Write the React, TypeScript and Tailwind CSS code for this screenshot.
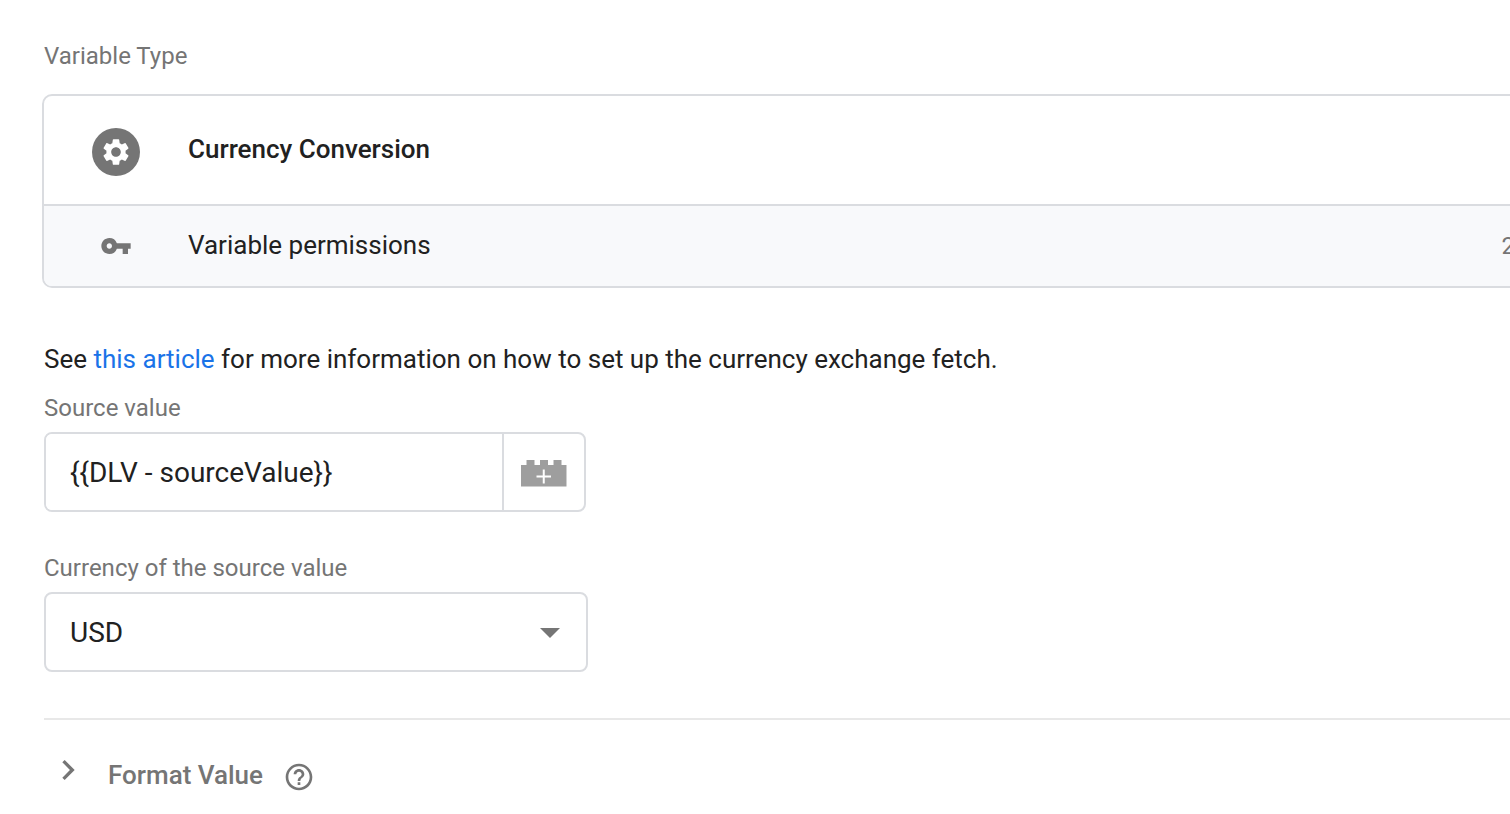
import { useState } from "react";
import { MdChevronRight, MdHelpOutline, MdSettings, MdVpnKey } from "react-icons/md";

function BrickIcon() {
  return (
    <svg width="46" height="28" viewBox="0 0 46 28" aria-hidden="true">
      <path
        d="M0 6h5.500V1h8v5H19V1h8v5h5.500V1h8v5H45.500v21.500H0z"
        fill="#9e9e9e"
      />
      <path d="M15.500 17.500h14.500M22.750 10.500v14" stroke="#fff" strokeWidth="2" />
    </svg>
  );
}

function VariableTypeCard() {
  return (
    <div className="-mr-12 overflow-hidden rounded-[10px] border-2 border-[#dadce0] bg-white">
      <button
        type="button"
        className="flex w-full items-start gap-12 px-12 pt-8 pb-7 text-left"
      >
        <span className="flex size-12 shrink-0 items-center justify-center rounded-full bg-[#757575]">
          <MdSettings className="size-8 text-white" />
        </span>
        <span className="text-[26px] leading-[42px] font-medium">Currency Conversion</span>
      </button>
      <div className="flex h-[82px] items-center gap-12 border-t-2 border-[#dadce0] bg-[#f8f9fb] pr-[41px] pl-12">
        <span className="flex w-12 shrink-0 justify-center">
          <MdVpnKey className="size-8 text-[#757575]" />
        </span>
        <span className="pb-0.5 text-[26px] leading-8">Variable permissions</span>
        <span className="ml-auto text-2xl leading-8 text-[#757575]">2</span>
      </div>
    </div>
  );
}

export default function App() {
  const [source, setSource] = useState("{{DLV - sourceValue}}");
  const [currency, setCurrency] = useState("USD");
  const [open, setOpen] = useState(false);

  return (
    <main className="min-h-screen overflow-hidden bg-white pt-10 pl-[42px] font-['Roboto',sans-serif] text-[#212121]">
      <h2 className="mb-[22px] pl-0.5 text-2xl leading-8 text-[#757575]">Variable Type</h2>
      <VariableTypeCard />

      <form className="pl-0.5" onSubmit={(e) => e.preventDefault()}>
        <p className="mt-14 mb-[18px] text-[26px] leading-[30px]">
          See{" "}
          <a href="#article" className="text-[#1a73e8]">
            this article
          </a>{" "}
          for more information on how to set up the currency exchange fetch.
        </p>

        <label htmlFor="source" className="mb-2 block text-2xl leading-8 text-[#757575]">
          Source value
        </label>
        <div className="flex h-20 w-full max-w-[542px] overflow-hidden rounded-lg border-2 border-[#dadce0]">
          <input
            id="source"
            type="text"
            value={source}
            onChange={(e) => setSource(e.target.value)}
            className="min-w-0 flex-1 bg-white px-6 pt-0.5 text-[28px] outline-none"
          />
          <button
            type="button"
            aria-label="Insert variable"
            className="flex w-[82px] shrink-0 items-center justify-center border-l-2 border-[#dadce0] pt-0.5"
          >
            <BrickIcon />
          </button>
        </div>

        <label htmlFor="currency" className="mt-10 mb-2 block text-2xl leading-8 text-[#757575]">
          Currency of the source value
        </label>
        <div className="relative w-full max-w-[544px]">
          <select
            id="currency"
            value={currency}
            onChange={(e) => setCurrency(e.target.value)}
            className="block h-20 w-full appearance-none rounded-lg border-2 border-[#dadce0] bg-white px-6 pt-0.5 text-[28px] outline-none"
          >
            <option>USD</option>
          </select>
          <span className="pointer-events-none absolute inset-y-0 right-7 flex items-center pt-0.5">
            <svg width="20" height="10" viewBox="0 0 20 10" aria-hidden="true">
              <path d="M0 0h20L10 10z" fill="#757575" />
            </svg>
          </span>
        </div>

        <hr className="mt-[46px] border-t-2 border-[#e8e8e8]" />

        <div className="mt-[30px] flex items-center gap-5 pl-1 text-[#757575]">
          <button
            type="button"
            aria-expanded={open}
            onClick={() => setOpen(!open)}
            className="flex items-start gap-5 text-[26px] font-medium"
          >
            <MdChevronRight className="size-10" />
            <span className="leading-[50px]">Format Value</span>
          </button>
          <button type="button" aria-label="Help" className="pt-1">
            <MdHelpOutline className="size-8" />
          </button>
        </div>
      </form>
    </main>
  );
}
